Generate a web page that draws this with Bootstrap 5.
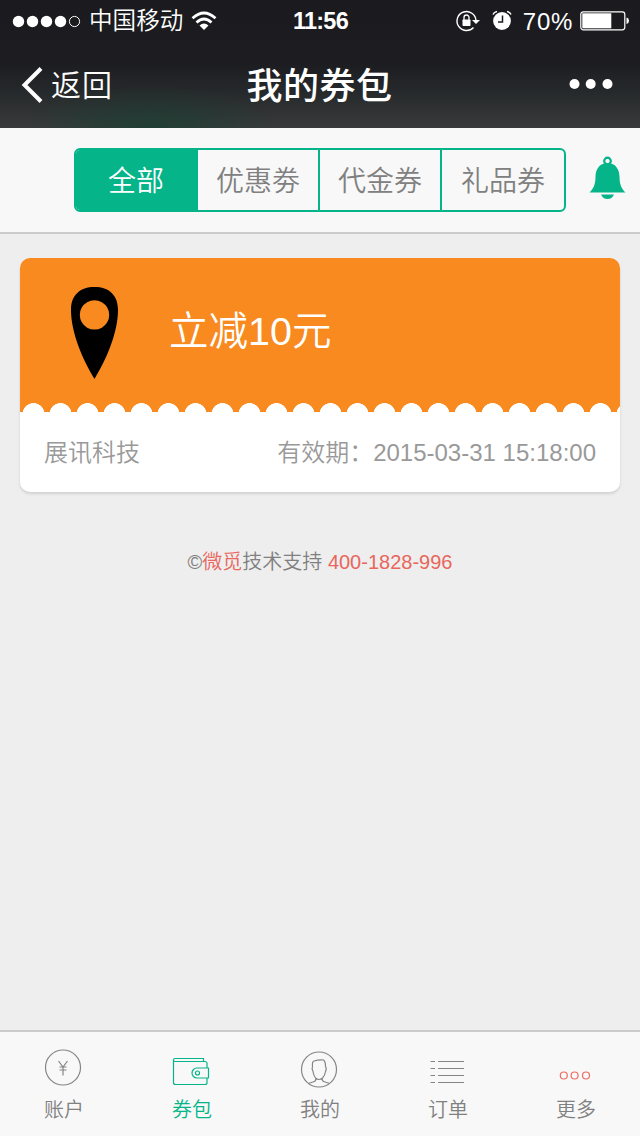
<!DOCTYPE html>
<html lang="zh-CN">
<head>
<meta charset="utf-8">
<meta name="viewport" content="width=device-width, initial-scale=1">
<title>我的券包</title>
<link href="https://cdn.jsdelivr.net/npm/bootstrap@5.3.0/dist/css/bootstrap.min.css" rel="stylesheet">
<style>
  :root { --green: #06b489; --grey: #808080; }
  body { font-family: "Liberation Sans", "Noto Sans CJK SC", sans-serif; font-weight: 350; background: #eee; line-height: 1; }
  .screen { width: 640px; height: 1136px; }
  .top-area { height: 128px; background: radial-gradient(ellipse 130px 42px at 150px 128px, rgba(24,64,50,.75), transparent), linear-gradient(#1a1a1f 0, #1d1d21 50%, #25282a 70%, #393a3b 100%); }
  .status { height: 41px; font-size: 24px; padding-left: 12px; padding-right: 10px; }
  .status .side { width: 270px; }
  .carrier { font-size: 23.6px; padding-top: 2px; margin-left: 7px; }
  .clock { font-weight: 700; font-size: 23.5px; letter-spacing: -.8px; padding-top: 2px; padding-right: 1px; }
  .battery-text { margin-left: 11px; letter-spacing: .7px; padding-top: 2px; }
  .title-row { height: 87px; padding: 0 27px 0 21px; }
  .title-row .side { width: 140px; }
  .back { font-size: 30px; letter-spacing: 1px; }
  .back span { margin-left: 7px; padding-top: 3px; }
  .page-title { font-size: 36px; font-weight: 500; letter-spacing: .5px; padding-top: 4px; padding-left: 5px; }
  .filter { height: 106px; background: #f8f8f8; border-bottom: 2px solid #ccc; padding: 20px 14px 0 74px; }
  .tabs { width: 492px; height: 64px; border: 2px solid var(--green); border-radius: 6px; }
  .tabs .btn { font-size: 28px; font-weight: 350; line-height: 60px; height: 60px; width: 122px; padding: 2px 0 0; border: 0; border-radius: 0; border-right: 2px solid var(--green); color: var(--grey); }
  .tabs .btn:last-child { border-right: 0; }
  .tabs .btn.active { background: var(--green); color: #fff; }
  .coupon { margin: 24px 20px 0; border: 0; border-radius: 10px; box-shadow: 0 2px 3px rgba(0,0,0,.12); }
  .coupon-top { height: 154px; background: #f88a20; padding-left: 50px; position: relative; }
  .coupon-top::after { content: ""; position: absolute; left: 0; right: 0; bottom: 0; height: 9px; background: radial-gradient(circle at 13.5px 11px, #fff 10.6px, transparent 11.2px) 0 0 / 27px 9px repeat-x; }
  .pin { margin-bottom: 4px; }
  .amount { font-size: 39.5px; margin-left: 50px; padding-bottom: 7px; }
  .coupon-info { height: 80px; padding: 1px 24px 0; font-size: 24px; color: #999; }
  .support { margin-top: 60px; font-size: 20px; line-height: 20px; color: #808080; }
  .support a { color: #e8665c; }
  .bottom { height: 106px; background: #f8f8f8; border-top: 2px solid #ccc; }
  .bottom a { color: var(--grey); font-size: 20px; }
  .bottom a.active { color: var(--green); }
  .bottom svg { margin-top: 12px; margin-bottom: 8px; }
</style>
</head>
<body>
<div class="screen d-flex flex-column overflow-hidden">
  <header class="top-area text-white">
    <div class="status d-flex align-items-center justify-content-between">
      <div class="side d-flex align-items-center">
        <svg width="70" height="14" viewBox="0 0 70 14" fill="#fff"><circle cx="6.5" cy="7.5" r="5.7"/><circle cx="20.5" cy="7.5" r="5.7"/><circle cx="34.5" cy="7.5" r="5.7"/><circle cx="48.5" cy="7.5" r="5.7"/><circle cx="62.5" cy="7.5" r="5.1" fill="none" stroke="#fff"/></svg>
        <span class="carrier">中国移动</span>
        <svg class="ms-2" width="26" height="20" viewBox="0 0 26 20" fill="none" stroke="#fff" stroke-width="2.800"><path d="M1.500 7.200Q13-3.200 24.500 7.200"/><path d="M5.500 11.500Q13 4.500 20.500 11.500"/><path d="M8.500 14.500Q13 10.500 17.500 14.500L13 19Z" fill="#fff" stroke="none"/></svg>
      </div>
      <div class="clock">11:56</div>
      <div class="side d-flex align-items-center justify-content-end">
        <svg width="24" height="22" viewBox="0 0 24 22"><path d="M17.500 17.500A9.500 9.500 0 1 1 20 10.500" fill="none" stroke="#fff" stroke-width="1.400"/><path d="M16 10H24L20 14Z" fill="#fff"/><rect x="6.500" y="9.500" width="8" height="6.500" rx=".7" fill="#fff"/><path d="M8 10V7.500a2.500 2.500 0 0 1 5 0V10" fill="none" stroke="#fff" stroke-width="1.300"/></svg>
        <svg style="margin-left:12px" width="20" height="21" viewBox="0 0 20 21"><circle cx="10" cy="11" r="8.900" fill="#fff"/><path d="M1 4.500Q2 2 5 1.500M19 4.500Q18 2 15 1.500" fill="none" stroke="#fff" stroke-width="1.500"/><path d="M10.500 5.500V12H6" fill="none" stroke="#1b1b20" stroke-width="1.500"/></svg>
        <span class="battery-text">70%</span>
        <svg style="margin-left:7px" width="50" height="20" viewBox="0 0 50 20"><rect x=".8" y=".8" width="44" height="18" rx="2.500" fill="none" stroke="#fff" stroke-width="1.200"/><rect x="2.300" y="2.300" width="29" height="15" fill="#fff"/><path d="M46.500 6.500q2.500 .5 2.500 3.300t-2.500 3.300Z" fill="#fff"/></svg>
      </div>
    </div>
    <nav class="title-row d-flex align-items-center justify-content-between">
      <div class="side back d-flex align-items-center">
        <svg width="23" height="36" viewBox="0 0 23 36" fill="none" stroke="#fff" stroke-width="4"><path d="M20 1.500L3.500 18L20 34.500"/></svg>
        <span>返回</span>
      </div>
      <div class="page-title">我的券包</div>
      <div class="side text-end"><svg width="44" height="12" viewBox="0 0 44 12" fill="#fff"><circle cx="5.500" cy="5" r="5"/><circle cx="21.700" cy="5" r="5"/><circle cx="38.500" cy="5" r="5"/></svg></div>
    </nav>
  </header>

  <section class="filter d-flex justify-content-between align-items-start">
    <div class="tabs d-flex overflow-hidden">
      <button class="btn active">全部</button><button class="btn">优惠劵</button><button class="btn">代金券</button><button class="btn">礼品券</button>
    </div>
    <svg class="mt-2" width="37" height="44" viewBox="0 0 37 44"><circle cx="18.500" cy="5" r="3.200" fill="none" stroke="#06b489" stroke-width="2.400"/><path d="M18.500 7C27 7 30.500 14 30.500 21C30.500 29 33 33 36.500 36.500H.5C4 33 6.500 29 6.500 21C6.500 14 10 7 18.500 7Z" fill="#06b489"/><circle cx="18.500" cy="5" r="2" fill="#f8f8f8"/><path d="M12 38.500H25Q23 43 18.500 43T12 38.500Z" fill="#06b489"/></svg>
  </section>

  <main class="flex-grow-1">
    <div class="card coupon overflow-hidden">
      <div class="coupon-top d-flex align-items-center text-white">
        <svg class="pin" width="49" height="94" viewBox="0 0 49 94"><path fill-rule="evenodd" d="M24.500 1C39 1 48 9 48 24C48 47 36 74 24.500 93C13 74 1 47 1 24C1 9 10 1 24.500 1ZM24.500 14.200a14.700 14.700 0 1 0 .01 0Z"/></svg>
        <div class="amount">立减10元</div>
      </div>
      <div class="coupon-info d-flex align-items-center justify-content-between">
        <span>展讯科技</span><span>有效期：2015-03-31 15:18:00</span>
      </div>
    </div>
    <div class="support text-center">©<a class="text-decoration-none">微觅</a>技术支持 <a class="text-decoration-none">400-1828-996</a></div>
  </main>

  <nav class="bottom row row-cols-5 g-0 text-center">
    <a class="col d-flex flex-column align-items-center text-decoration-none">
      <svg width="40" height="48" viewBox="0 0 40 48" fill="none" stroke="#858585" stroke-width="1.200"><circle cx="19" cy="23.500" r="17.500"/><path d="M14.500 17L19 23L23.500 17M19 23V31.500M15.500 23H22.500M15.500 26H22.500"/></svg>
      <span>账户</span></a>
    <a class="col d-flex flex-column align-items-center text-decoration-none active">
      <svg width="40" height="48" viewBox="0 0 40 48" fill="none" stroke="#06b489" stroke-width="1.200"><path d="M35 23.500V19.500Q35 17.500 33 17.500H3Q1.500 17.500 1.500 16Q1.500 14.500 3 14.500H31.500V17.500M1.500 16V38.500Q1.500 40.500 3.500 40.500H33Q35 40.500 35 38.500V34M36.500 24H25a5 5 0 0 0 0 10H36.500Z"/><circle cx="25.500" cy="29" r="2"/></svg>
      <span>券包</span></a>
    <a class="col d-flex flex-column align-items-center text-decoration-none">
      <svg width="40" height="48" viewBox="0 0 40 48" fill="none" stroke="#858585" stroke-width="1.200"><circle cx="19" cy="25.500" r="17.500"/><path d="M14 17Q19 15.500 23.500 16Q25.500 17.500 25.500 22.500Q27 24.500 25.500 27.500Q25 31.500 22.500 34Q19 37 15.500 34Q13.500 31.500 13 27.500Q11.500 24.500 12.500 22.500Q12 17.500 14 17ZM16 34.500Q16 37.500 13 38L9 39.300M22 34.500Q22 37.500 25 38L29 39.300"/></svg>
      <span>我的</span></a>
    <a class="col d-flex flex-column align-items-center text-decoration-none">
      <svg width="40" height="48" viewBox="0 0 40 48" stroke="#858585" stroke-width="1.200"><path d="M2.500 17.500H7M10 17.500H36M2.500 24.500H7M10 24.500H36M2.500 31.500H7M10 31.500H36M2.500 38.500H7M10 38.500H36"/></svg>
      <span>订单</span></a>
    <a class="col d-flex flex-column align-items-center text-decoration-none">
      <svg width="40" height="48" viewBox="0 0 40 48" fill="none" stroke="#ee6b62" stroke-width="1.200"><circle cx="7.800" cy="31.500" r="3.500"/><circle cx="18.600" cy="31.500" r="3.500"/><circle cx="30" cy="31.500" r="3.500"/></svg>
      <span>更多</span></a>
  </nav>
</div>
<script src="https://cdn.jsdelivr.net/npm/bootstrap@5.3.0/dist/js/bootstrap.bundle.min.js"></script>
</body>
</html>
